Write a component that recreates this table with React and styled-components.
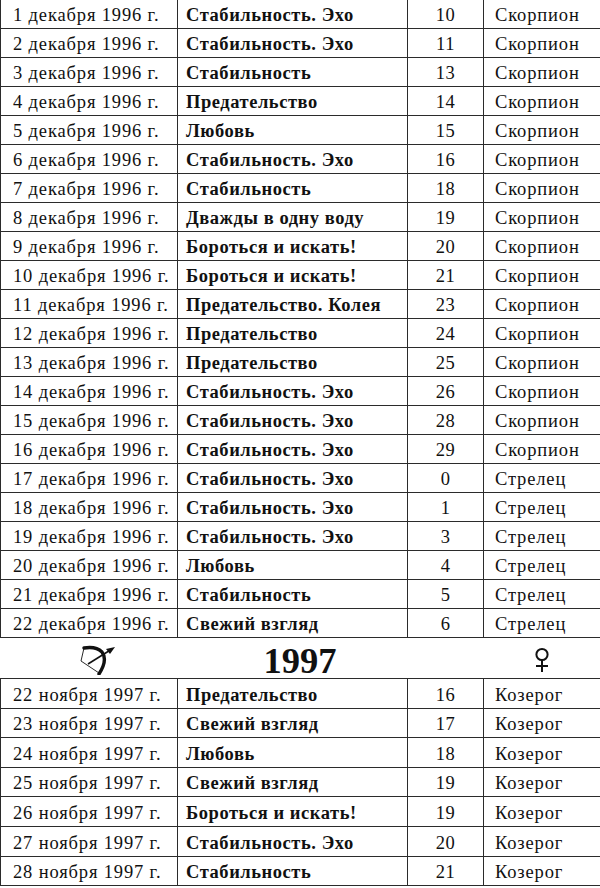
import styled, { createGlobalStyle } from 'styled-components';

const GlobalStyle = createGlobalStyle`
  html, body {
    margin: 0;
    padding: 0;
    background: #fff;
  }
  body {
    width: 600px;
    height: 888px;
    overflow: hidden;
    font-family: 'Liberation Serif', 'DejaVu Serif', serif;
    color: #111;
  }
`;

const december = [
  [1, 'Стабильность. Эхо', 10, 'Скорпион'],
  [2, 'Стабильность. Эхо', 11, 'Скорпион'],
  [3, 'Стабильность', 13, 'Скорпион'],
  [4, 'Предательство', 14, 'Скорпион'],
  [5, 'Любовь', 15, 'Скорпион'],
  [6, 'Стабильность. Эхо', 16, 'Скорпион'],
  [7, 'Стабильность', 18, 'Скорпион'],
  [8, 'Дважды в одну воду', 19, 'Скорпион'],
  [9, 'Бороться и искать!', 20, 'Скорпион'],
  [10, 'Бороться и искать!', 21, 'Скорпион'],
  [11, 'Предательство. Колея', 23, 'Скорпион'],
  [12, 'Предательство', 24, 'Скорпион'],
  [13, 'Предательство', 25, 'Скорпион'],
  [14, 'Стабильность. Эхо', 26, 'Скорпион'],
  [15, 'Стабильность. Эхо', 28, 'Скорпион'],
  [16, 'Стабильность. Эхо', 29, 'Скорпион'],
  [17, 'Стабильность. Эхо', 0, 'Стрелец'],
  [18, 'Стабильность. Эхо', 1, 'Стрелец'],
  [19, 'Стабильность. Эхо', 3, 'Стрелец'],
  [20, 'Любовь', 4, 'Стрелец'],
  [21, 'Стабильность', 5, 'Стрелец'],
  [22, 'Свежий взгляд', 6, 'Стрелец'],
];

const november = [
  [22, 'Предательство', 16, 'Козерог'],
  [23, 'Свежий взгляд', 17, 'Козерог'],
  [24, 'Любовь', 18, 'Козерог'],
  [25, 'Свежий взгляд', 19, 'Козерог'],
  [26, 'Бороться и искать!', 19, 'Козерог'],
  [27, 'Стабильность. Эхо', 20, 'Козерог'],
  [28, 'Стабильность', 21, 'Козерог'],
];

const Page = styled.div`
  width: 600px;
  margin-top: -1px;
`;

const Table = styled.table`
  width: 600px;
  border-collapse: collapse;
  table-layout: fixed;
  font-size: 18.5px;
`;

const Row = styled.tr`
  height: ${(p) => p.$h}px;
`;

const Cell = styled.td`
  border: 1.6px solid #2b2b2b;
  padding: 3px 0 0 ${(p) => p.$pad || 0}px;
  text-align: ${(p) => p.$align || 'left'};
  font-weight: ${(p) => (p.$bold ? 700 : 400)};
  white-space: nowrap;
  overflow: hidden;
  line-height: 1;
  letter-spacing: ${(p) => p.$ls || 0}px;
`;

const YearBar = styled.div`
  height: 40px;
  display: grid;
  grid-template-columns: 200px 200px 200px;
  align-items: center;
`;

const Year = styled.div`
  text-align: center;
  font-weight: 700;
  font-size: 36.5px;
  line-height: 1;
  padding-top: 5px;
`;

const Glyph = styled.div`
  display: flex;
  justify-content: flex-start;
  padding-left: ${(p) => p.$pad || 0}px;
  padding-top: ${(p) => p.$top || 0}px;
`;

function Sagittarius() {
  return (
    <svg width="38" height="30" viewBox="0 0 38 30">
      <path d="M5 3 Q17 1 23 7 Q29 15 20 29" fill="none" stroke="#111" strokeWidth="3.4" strokeLinecap="round" />
      <path d="M5 3 L2 16 L20 28" fill="none" stroke="#111" strokeWidth="0.9" />
      <path d="M9 19 L33 4" fill="none" stroke="#111" strokeWidth="1.6" />
      <path d="M36 2 L27 4 L31 9 Z" fill="#111" />
    </svg>
  );
}

function Venus() {
  return (
    <svg width="16" height="26" viewBox="0 0 16 26">
      <circle cx="8" cy="7.5" r="5.6" fill="none" stroke="#111" strokeWidth="2" />
      <path d="M8 13 L8 25 M2 19 L14 19" stroke="#111" strokeWidth="2" />
    </svg>
  );
}

function DataTable({ rows, month, year, height }) {
  return (
    <Table>
      <colgroup>
        <col style={{ width: 177 }} />
        <col style={{ width: 230 }} />
        <col style={{ width: 76 }} />
        <col style={{ width: 117 }} />
      </colgroup>
      <tbody>
        {rows.map(([day, theme, deg, sign], i) => (
          <Row key={i} $h={height}>
            <Cell $pad={12} $ls={0.85}>{`${day} ${month} ${year} г.`}</Cell>
            <Cell $pad={8} $ls={0.55} $bold>{theme}</Cell>
            <Cell $align="center" $ls={0.5}>{deg}</Cell>
            <Cell $pad={11} $ls={0.85}>{sign}</Cell>
          </Row>
        ))}
      </tbody>
    </Table>
  );
}

export default function App() {
  return (
    <Page>
      <GlobalStyle />
      <DataTable rows={december} month="декабря" year={1996} height={29} />
      <YearBar>
        <Glyph $pad={79} $top={3}>
          <Sagittarius />
        </Glyph>
        <Year>1997</Year>
        <Glyph $pad={134} $top={2}>
          <Venus />
        </Glyph>
      </YearBar>
      <DataTable rows={november} month="ноября" year={1997} height={29.6} />
    </Page>
  );
}
